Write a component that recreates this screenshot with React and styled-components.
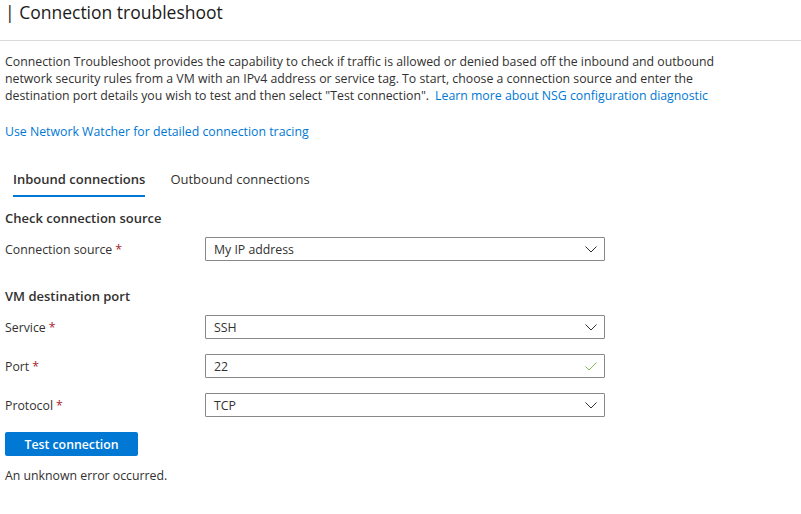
import React from "react";
import styled, { createGlobalStyle } from "styled-components";

const Global = createGlobalStyle`
  html, body { margin: 0; padding: 0; background: #ffffff; }
  body { font-family: "Open Sans", "Noto Sans", sans-serif; color: #323130; }
  * { box-sizing: border-box; }
`;

const Page = styled.div`
  width: 801px;
  height: 514px;
  overflow: hidden;
`;

const Header = styled.header`
  height: 41px;
  border-bottom: 1px solid #d9d9d9;
  padding: 0 5px;
  display: flex;
  align-items: flex-start;
`;

const Title = styled.h1`
  margin: 0;
  font-size: 17.5px;
  font-weight: 400;
  line-height: 24px;
  color: #1b1a19;
`;

const Content = styled.main`
  padding: 0 5px;
  display: flex;
  flex-direction: column;
`;

const Intro = styled.p`
  margin: 12px 0 0;
  font-size: 12.3px;
  line-height: 17px;
  width: 740px;
`;

const Link = styled.a`
  color: #0078d4;
  text-decoration: none;
  cursor: pointer;
  margin-left: ${(p) => (p.$gap ? "6px" : "0")};
`;

const LinkLine = styled.div`
  margin-top: 19px;
  font-size: 12.3px;
  line-height: 17px;
`;

const Tabs = styled.div`
  display: flex;
  gap: 25px;
  margin-top: 31px;
  padding-left: 8px;
`;

const Tab = styled.button`
  border: none;
  background: none;
  padding: 0 0 7px;
  font-family: inherit;
  font-size: 13px;
  line-height: 17px;
  font-weight: ${(p) => (p.$active ? 600 : 400)};
  color: #323130;
  border-bottom: 2px solid ${(p) => (p.$active ? "#0078d4" : "transparent")};
  cursor: pointer;
`;

const Heading = styled.h2`
  margin: ${(p) => p.$top}px 0 9px;
  font-size: 13px;
  font-weight: 600;
  line-height: 20px;
  color: #323130;
`;

const Row = styled.div`
  display: flex;
  align-items: center;
  margin-bottom: ${(p) => (p.$last ? 0 : 15)}px;
`;

const Label = styled.label`
  width: 200px;
  font-size: 12.3px;
  line-height: 17px;
`;

const Req = styled.span`
  color: #a4262c;
  margin-left: 3px;
`;

const Field = styled.div`
  width: 400px;
  height: 24px;
  border: 1px solid #8a8886;
  border-radius: 1px;
  display: flex;
  align-items: center;
  justify-content: space-between;
  padding: 0 7px 0 8px;
  font-size: 12.3px;
  color: #323130;
`;

const Icon = styled.svg`
  width: 12px;
  height: 12px;
  flex: none;
`;

const Button = styled.button`
  margin-top: 15px;
  align-self: flex-start;
  width: 133px;
  height: 24px;
  border: none;
  border-radius: 2px;
  background: #0078d4;
  color: #ffffff;
  font-family: inherit;
  font-size: 12.3px;
  font-weight: 600;
  cursor: pointer;
`;

const Status = styled.div`
  margin-top: 11px;
  font-size: 12.3px;
  line-height: 17px;
`;

const Chevron = () => (
  <Icon viewBox="0 0 12 12">
    <path d="M0.5 3.5 L6 9 L11.5 3.5" fill="none" stroke="#323130" strokeWidth="1" />
  </Icon>
);

const Check = () => (
  <Icon viewBox="0 0 12 12">
    <path d="M0.5 6.5 L4 10 L11.5 2.5" fill="none" stroke="#7fba4a" strokeWidth="1" />
  </Icon>
);

const FormRow = ({ label, value, icon, last }) => (
  <Row $last={last}>
    <Label>
      {label}
      <Req>*</Req>
    </Label>
    <Field>
      <span>{value}</span>
      {icon}
    </Field>
  </Row>
);

export default function App() {
  return (
    <Page>
      <Global />
      <Header>
        <Title>| Connection troubleshoot</Title>
      </Header>
      <Content>
        <Intro>
          Connection Troubleshoot provides the capability to check if traffic is allowed or denied based off the inbound and outbound
          <br />
          network security rules from a VM with an IPv4 address or service tag. To start, choose a connection source and enter the
          <br />
          destination port details you wish to test and then select "Test connection".
          <Link $gap>Learn more about NSG configuration diagnostic</Link>
        </Intro>
        <LinkLine>
          <Link>Use Network Watcher for detailed connection tracing</Link>
        </LinkLine>
        <Tabs>
          <Tab $active>Inbound connections</Tab>
          <Tab>Outbound connections</Tab>
        </Tabs>
        <Heading $top={11}>Check connection source</Heading>
        <FormRow label="Connection source" value="My IP address" icon={<Chevron />} last />
        <Heading $top={25}>VM destination port</Heading>
        <FormRow label="Service" value="SSH" icon={<Chevron />} />
        <FormRow label="Port" value="22" icon={<Check />} />
        <FormRow label="Protocol" value="TCP" icon={<Chevron />} last />
        <Button>Test connection</Button>
        <Status>An unknown error occurred.</Status>
      </Content>
    </Page>
  );
}
